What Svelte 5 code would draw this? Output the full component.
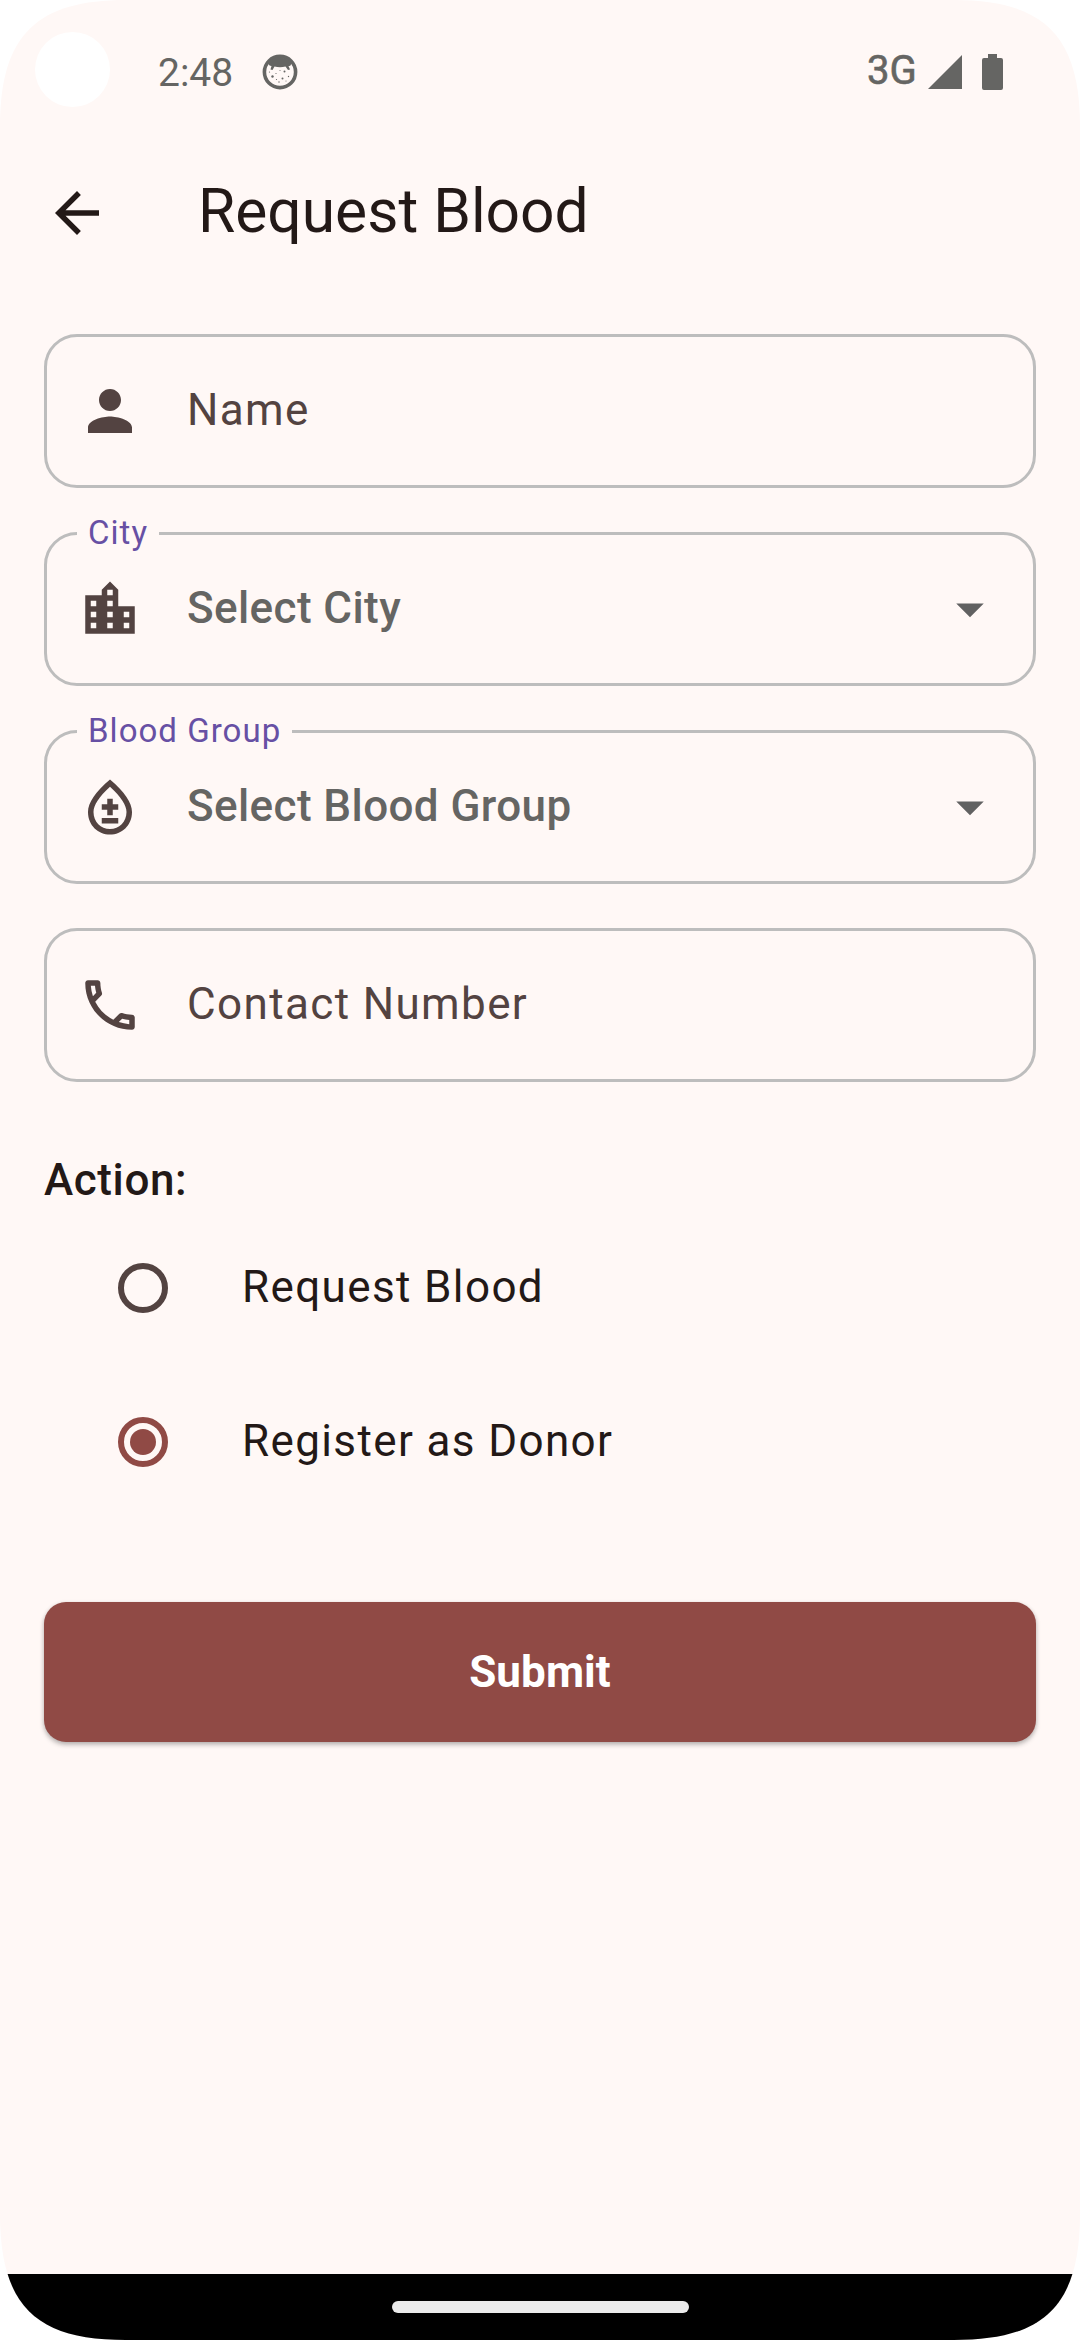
<script>
  const icons = {
    person: 'M12 12c2.21 0 4-1.79 4-4s-1.79-4-4-4-4 1.79-4 4 1.79 4 4 4zm0 2c-2.67 0-8 1.34-8 4v2h16v-2c0-2.66-5.33-4-8-4z',
    city: 'M15 11V5l-3-3-3 3v2H3v14h18V11h-6zm-8 8H5v-2h2v2zm0-4H5v-2h2v2zm0-4H5V9h2v2zm6 8h-2v-2h2v2zm0-4h-2v-2h2v2zm0-4h-2V9h2v2zm0-4h-2V5h2v2zm6 12h-2v-2h2v2zm0-4h-2v-2h2v2z',
    blood: 'M12 2c-5.33 4.55-8 8.48-8 11.8 0 4.98 3.8 8.2 8 8.2s8-3.22 8-8.2c0-3.32-2.67-7.25-8-11.8zm0 18c-3.35 0-6-2.57-6-6.2 0-2.34 1.95-5.44 6-9.14 4.05 3.7 6 6.79 6 9.14 0 3.63-2.65 6.2-6 6.2zm3-4v2H9v-2h6zm-2-3v2h-2v-2H9v-2h2V9h2v2h2v2h-2z',
    phone: 'M6.54 5c.06.89.21 1.76.45 2.59l-1.2 1.2c-.41-1.2-.67-2.47-.76-3.79h1.51m9.86 12.02c.85.24 1.72.39 2.6.45v1.49c-1.32-.09-2.59-.35-3.8-.75l1.2-1.19M7.5 3H4c-.55 0-1 .45-1 1 0 9.39 7.61 17 17 17 .55 0 1-.45 1-1v-3.49c0-.55-.45-1-1-1-1.24 0-2.45-.2-3.57-.57-.1-.04-.21-.05-.31-.05-.26 0-.51.1-.71.29l-2.2 2.2c-2.83-1.45-5.15-3.76-6.59-6.59l2.2-2.2c.28-.28.36-.67.25-1.02C8.7 6.45 8.5 5.25 8.5 4c0-.55-.45-1-1-1z',
  };
  const fields = [
    { icon: 'person', text: 'Name' },
    { icon: 'city', text: 'Select City', label: 'City', select: true },
    { icon: 'blood', text: 'Select Blood Group', label: 'Blood Group', select: true },
    { icon: 'phone', text: 'Contact Number' },
  ];
  const options = ['Request Blood', 'Register as Donor'];
  let action = $state('Register as Donor');
</script>

<div class="device">
  <header class="status">
    <span class="camera"></span>
    <span class="time">2:48</span>
    <svg class="face" viewBox="0 0 36 36">
      <circle cx="18" cy="18" r="15.6" fill="none" stroke="currentColor" stroke-width="3.6" />
      <path d="M6 8Q17 -1 30 8L28.500 11.500Q27.500 12 26.500 12L28 15.500L26 16L23.500 12.500Q18 14 12.500 12.500L10.500 16L8.500 15.500L9.500 12Q8 12 7 11Z" fill="currentColor" />
      <g fill="currentColor">
        <circle cx="10.500" cy="22.500" r="1.200" /><circle cx="22.500" cy="17.500" r="1" />
        <circle cx="20.500" cy="24.500" r="1" /><circle cx="14" cy="19.500" r=".6" />
        <circle cx="14.500" cy="25.500" r=".6" /><circle cx="26.500" cy="22.500" r=".7" />
        <circle cx="17" cy="28" r=".7" /><circle cx="7.500" cy="18" r=".6" />
        <circle cx="18" cy="16.500" r=".5" /><circle cx="24" cy="27" r=".5" />
      </g>
    </svg>
    <span class="network">3G</span>
    <svg class="signal" viewBox="0 0 34 34"><path d="M34 0V34H0Z" fill="currentColor" /></svg>
    <svg class="battery" viewBox="0 0 21 36"><path d="M6 0h9v4h4q2 0 2 2v28q0 2-2 2H2q-2 0-2-2V6q0-2 2-2h4Z" fill="currentColor" /></svg>
  </header>

  <nav class="appbar">
    <svg class="icon" viewBox="0 0 24 24"><path d="M20 11H7.830l5.590-5.590L12 4l-8 8 8 8 1.410-1.410L7.830 13H20v-2z" fill="currentColor" /></svg>
    <h1>Request Blood</h1>
  </nav>

  <main>
    <div class="fields">
      {#each fields as field}
        <div class="field" class:select={field.select}>
          {#if field.label}<span class="label">{field.label}</span>{/if}
          <svg class="icon" viewBox="0 0 24 24"><path d={icons[field.icon]} fill="currentColor" /></svg>
          <span class="value">{field.text}</span>
          {#if field.select}
            <svg class="icon arrow" viewBox="0 0 24 24"><path d="M7 10l5 5 5-5z" fill="currentColor" /></svg>
          {/if}
        </div>
      {/each}
    </div>

    <h2>Action:</h2>
    <div class="options" role="radiogroup">
      {#each options as option}
        <div class="option" role="radio" tabindex="-1" aria-checked={action === option}
          onclick={() => (action = option)} onkeydown={() => (action = option)}>
          <span class="radio" class:checked={action === option}></span>
          <span class="text">{option}</span>
        </div>
      {/each}
    </div>
    <button>Submit</button>
  </main>

  <footer><span class="pill"></span></footer>
</div>

<style>
  :global(body) { background: #fff; }
  .device {
    width: 1080px; height: 2340px; box-sizing: border-box;
    display: flex; flex-direction: column;
    background: #fff8f6; color: #231917;
    font-family: Roboto, "Liberation Sans", sans-serif;
    font-size: 44px; letter-spacing: 1.375px;
    clip-path: path("M0 126C0 34 38 0 126 0H954C1042 0 1080 34 1080 126V2214C1080 2310 1040 2340 954 2340H126C40 2340 0 2310 0 2214Z");
  }
  svg { display: block; flex: none; }
  .icon { width: 66px; height: 66px; }
  .status {
    height: 143px; box-sizing: border-box; padding: 0 77px 0 35px;
    display: flex; align-items: center; color: #656563; letter-spacing: 0;
  }
  .camera { width: 75px; height: 75px; border-radius: 50%; background: #fff; margin-bottom: 4px; }
  .time { font-size: 39px; line-height: 46px; margin: 2px 0 0 48px; width: 104px; }
  .face { width: 36px; height: 36px; }
  .network {
    font-size: 40px; line-height: 46px; margin: 0 0 2px auto; width: 61px;
    -webkit-text-stroke: 0.6px currentColor;
  }
  .signal { width: 34px; height: 34px; }
  .battery { width: 21px; height: 36px; margin-left: 20px; }
  .appbar { height: 140px; display: flex; align-items: center; padding-left: 44px; gap: 88px; }
  h1 { margin: 0 0 3px; font-size: 60.5px; line-height: 77px; font-weight: 400; letter-spacing: 0; }
  main { flex: 1; padding: 51px 44px 0; }
  .fields { display: grid; gap: 44px; }
  .field {
    position: relative; height: 154px; box-sizing: border-box;
    border: 3px solid #bdbdbd; border-radius: 33px;
    display: flex; align-items: center; padding: 0 30px; color: #534341;
  }
  .value { margin-left: 44px; padding-bottom: 2px; line-height: 52px; }
  .select .value { color: #656563; font-weight: 500; letter-spacing: 0.4px; }
  .arrow { margin-left: auto; color: #616161; }
  .label {
    position: absolute; left: 30px; top: -22px; padding: 0 11px;
    background: #fff8f6; color: #6750a4; font-size: 33px; line-height: 40px; letter-spacing: 1.03px;
  }
  h2 { margin: 71px 0 0; font-size: 44px; line-height: 55px; font-weight: 500; letter-spacing: 0.6px; }
  .options { margin-top: 3px; }
  .option { height: 154px; display: flex; align-items: center; padding-left: 74px; gap: 74px; }
  .text { padding-bottom: 3px; }
  .radio {
    width: 50px; height: 50px; box-sizing: border-box; border: 6px solid #534341; border-radius: 50%;
    display: grid; place-items: center;
  }
  .checked { border-color: #904a45; }
  .checked::after { content: ""; width: 26px; height: 26px; border-radius: 50%; background: #904a45; }
  button {
    display: block; width: 100%; height: 140px; margin-top: 83px; padding: 0;
    border: 0; border-radius: 22px; background: #904a45; color: #fff;
    font: 700 44px/52px Roboto, sans-serif; letter-spacing: 0.1px;
    box-shadow: 0 3px 5px rgba(0, 0, 0, 0.22), 0 1px 4px rgba(0, 0, 0, 0.12);
  }
  footer { height: 66px; background: #000; display: flex; justify-content: center; align-items: center; }
  .pill { width: 297px; height: 12px; border-radius: 6px; background: #ebebeb; }
</style>
